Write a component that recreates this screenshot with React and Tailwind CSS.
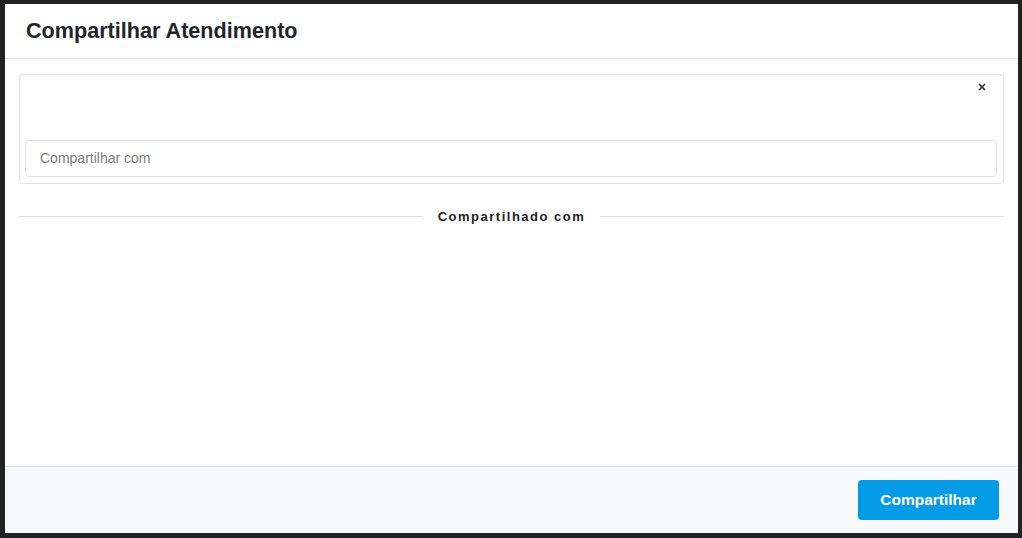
import { X } from 'lucide-react';

export default function App() {
  return (
    <div
      className="w-[1022px] h-[538px] bg-[#222222] pt-[4px] pl-[5px] overflow-hidden"
      style={{ fontFamily: '"Liberation Sans", Arial, sans-serif' }}
    >
      {/* Modal */}
      <div className="w-[1013px] h-[529px] bg-white flex flex-col">
        {/* Header */}
        <div className="h-[55px] shrink-0 border-b border-[#dee2e6] flex items-center pl-[21px]">
          <h1 className="text-[21.6px] font-bold text-[#212529] leading-none">Compartilhar Atendimento</h1>
        </div>

        {/* Body */}
        <div className="flex-1 px-[14px] pt-[15px]">
          <div className="h-[110px] border border-[#dfe1e3] rounded-[4px] flex flex-col px-[5px]">
            <div className="flex justify-end pt-[7px] pr-[11px] h-[65px]">
              <X size={10} strokeWidth={4} className="text-[#333]" />
            </div>
            <div className="h-[37px] border border-[#dfe1e3] rounded-[4px] flex items-center pl-[14px] mr-[1px]">
              <span className="text-[14px] text-[#7d7d7d]">Compartilhar com</span>
            </div>
          </div>

          <div className="flex items-center mt-[26px]">
            <div className="flex-1 h-px bg-[#dcdcdc]" />
            <span className="px-[15px] text-[13px] font-bold tracking-[1.5px] text-[#222] leading-none">Compartilhado com</span>
            <div className="flex-1 h-px bg-[#dcdcdc]" />
          </div>
        </div>

        {/* Footer */}
        <div className="h-[67px] shrink-0 border-t border-[#dee2e6] bg-[#f8f9fa] flex items-center justify-end pr-[19px]">
          <button className="w-[141px] h-[40px] rounded-[4px] bg-[#039be5] text-white text-[15.5px] font-bold">
            Compartilhar
          </button>
        </div>
      </div>
    </div>
  );
}
